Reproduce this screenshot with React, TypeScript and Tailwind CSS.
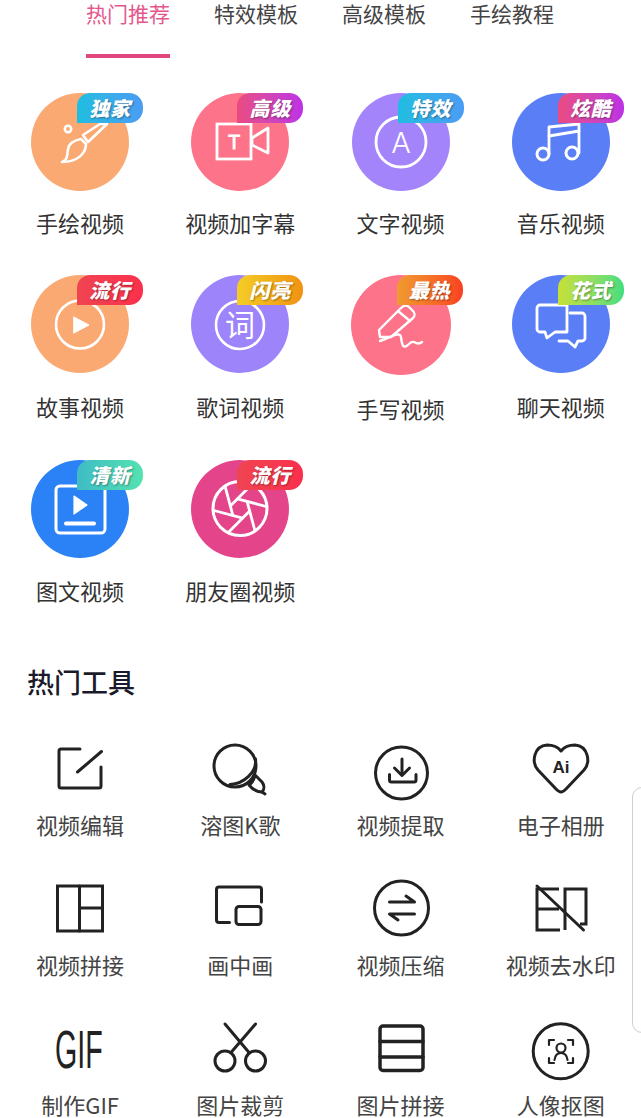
import React from "react";

const W = "#ffffff";

function CircleSvg({ children, size = 98 }: { children: React.ReactNode; size?: number }) {
  return (
    <svg
      width={size}
      height={size}
      viewBox={`0 0 ${size} ${size}`}
      fill="none"
      stroke={W}
      strokeLinecap="round"
      strokeLinejoin="round"
      strokeWidth={2.6}
      className="absolute inset-0"
    >
      {children}
    </svg>
  );
}

const apertureLines = [0, 60, 120, 180, 240, 300].map((deg) => {
  const cx = 49;
  const cy = 48.5;
  const a = ((deg + 15) * Math.PI) / 180;
  const x1 = cx + 10 * Math.cos(a);
  const y1 = cy + 10 * Math.sin(a);
  const dx = Math.cos(a + (2 * Math.PI) / 3);
  const dy = Math.sin(a + (2 * Math.PI) / 3);
  const px = x1 - cx;
  const py = y1 - cy;
  const b = px * dx + py * dy;
  const t = -b + Math.sqrt(b * b - (px * px + py * py) + 27 * 27);
  return { x1, y1, x2: x1 + dx * t, y2: y1 + dy * t };
});

const videoIcons: Record<string, React.ReactNode> = {
  brush: (
    <CircleSvg>
      <circle cx="37" cy="36" r="3.2" />
      <path d="M52 42 L69 31 L76 31 L57 49 Z" />
      <path d="M31 69 C37 67 36 62 37 56 C38 50 45 47 50 46 L55 51 C55 60 47 69 31 69 Z" />
    </CircleSvg>
  ),
  video: (
    <CircleSvg>
      <rect x="26" y="31" width="34" height="35" strokeLinejoin="miter" strokeWidth="2.8" />
      <path d="M61 45 L77 35 L77 60 L61 52 Z" strokeWidth="2.8" />
      <text x="43" y="56" fill={W} stroke={W} strokeWidth="0.8" fontSize="20" textAnchor="middle" fontFamily="'Liberation Sans', sans-serif">T</text>
    </CircleSvg>
  ),
  a: (
    <CircleSvg>
      <circle cx="49" cy="49" r="25" strokeWidth="2.8" />
      <text x="49" y="60" fill={W} stroke="none" fontSize="29" textAnchor="middle" fontFamily="'Inter', sans-serif" fontWeight="300">A</text>
    </CircleSvg>
  ),
  music: (
    <CircleSvg>
      <circle cx="31" cy="61" r="6" strokeWidth="3" />
      <circle cx="60" cy="60" r="6" strokeWidth="3" />
      <path d="M37 61 V34 L67 31 V60" strokeWidth="2.8" />
      <path d="M37 43 L67 38" strokeWidth="2.8" />
    </CircleSvg>
  ),
  play: (
    <CircleSvg>
      <circle cx="49" cy="49.5" r="24" strokeWidth="2.6" />
      <path d="M43 42 L58 50 L43 58 Z" fill={W} stroke={W} strokeWidth="1" />
    </CircleSvg>
  ),
  ci: (
    <CircleSvg>
      <circle cx="49" cy="50" r="24" strokeWidth="2.6" />
      <text x="49" y="61" fill={W} stroke="none" fontSize="30" textAnchor="middle" fontFamily="'Noto Sans CJK SC', sans-serif">词</text>
    </CircleSvg>
  ),
  pen: (
    <CircleSvg size={100}>
      <path d="M29 62 L28 55 L50 33 C53 30 56 30 58 32 L62 36 C64 38 64 41 62 43 L40 62 Z" strokeWidth="2.4" />
      <path d="M47 36 L59 46" strokeWidth="2.4" />
      <path d="M29 66 C40 62 49 56 50 62 C51 70 52 75 58 69 C64 63 65 72 71 67" strokeWidth="2.4" />
    </CircleSvg>
  ),
  chat: (
    <CircleSvg>
      <path d="M28 30 H55 V57 H43 L35 63 L33 57 H28 A3 3 0 0 1 25 54 V33 A3 3 0 0 1 28 30 Z" strokeWidth="2.8" />
      <path d="M58 38 H70 A3 3 0 0 1 73 41 V63 A3 3 0 0 1 70 66 H66 L63 72 L56 66 H47" strokeWidth="2.8" />
    </CircleSvg>
  ),
  player: (
    <CircleSvg>
      <rect x="25" y="26" width="49" height="47" rx="4" strokeWidth="3" />
      <path d="M43 36 L56 45 L43 54 Z" fill={W} stroke={W} strokeWidth="1.2" />
      <path d="M35 63.5 H63" strokeWidth="4" />
    </CircleSvg>
  ),
  aperture: (
    <CircleSvg>
      <circle cx="49" cy="48.5" r="27" strokeWidth="3" />
      {apertureLines.map((l, i) => (
        <line key={i} x1={l.x1} y1={l.y1} x2={l.x2} y2={l.y2} strokeWidth="2.8" />
      ))}
    </CircleSvg>
  ),
};

type Tile = { label: string; icon: string; circle: string; badge: string; grad: string; size?: string };

function VideoTile({ t, labelClass }: { t: Tile; labelClass: string }) {
  return (
    <div className="flex flex-col items-center">
      <div className={`relative rounded-full ${t.circle} ${t.size ?? "w-[98px] h-[98px]"}`}>
        {videoIcons[t.icon]}
        <div
          className={`absolute left-[46px] top-0 w-[66px] h-[30px] rounded-tl-[13px] rounded-tr-[14px] rounded-br-[14px] flex items-center justify-center text-white text-[20px] leading-none font-black italic tracking-[1px] [text-shadow:1px_1px_2px_rgba(0,0,0,0.35)] ${t.grad}`}
        >
          {t.badge}
        </div>
      </div>
      <div className={`${labelClass} mb-[2px] h-[30px] leading-[30px] text-[22px] text-[#333333] whitespace-nowrap`}>{t.label}</div>
    </div>
  );
}

const row1: Tile[] = [
  { label: "手绘视频", icon: "brush", circle: "bg-[#f9a971]", badge: "独家", grad: "bg-gradient-to-r from-[#1dbde0] to-[#4a9cf4]" },
  { label: "视频加字幕", icon: "video", circle: "bg-[#fd7389]", badge: "高级", grad: "bg-gradient-to-r from-[#ea4a80] to-[#bd2fe6]" },
  { label: "文字视频", icon: "a", circle: "bg-[#a384fa]", badge: "特效", grad: "bg-gradient-to-r from-[#1dbde0] to-[#4a9cf4]" },
  { label: "音乐视频", icon: "music", circle: "bg-[#5a7ef5]", badge: "炫酷", grad: "bg-gradient-to-r from-[#ea4a80] to-[#bd2fe6]" },
];
const row2: Tile[] = [
  { label: "故事视频", icon: "play", circle: "bg-[#f9a971]", badge: "流行", grad: "bg-gradient-to-r from-[#f04452] to-[#fb2f4c]" },
  { label: "歌词视频", icon: "ci", circle: "bg-[#9d84fb]", badge: "闪亮", grad: "bg-gradient-to-r from-[#f4cd25] to-[#f09212]" },
  { label: "手写视频", icon: "pen", circle: "bg-[#fd7389]", badge: "最热", grad: "bg-gradient-to-r from-[#f09a30] to-[#f83f22]", size: "w-[100px] h-[100px]" },
  { label: "聊天视频", icon: "chat", circle: "bg-[#5a7ef5]", badge: "花式", grad: "bg-gradient-to-r from-[#c6e034] to-[#3fdd7f]" },
];
const row3: Tile[] = [
  { label: "图文视频", icon: "player", circle: "bg-[#2b82f6]", badge: "清新", grad: "bg-gradient-to-r from-[#3fbcc4] to-[#54e2b0]" },
  { label: "朋友圈视频", icon: "aperture", circle: "bg-[#e4458a]", badge: "流行", grad: "bg-gradient-to-r from-[#f04452] to-[#fb2f4c]" },
];

function ToolSvg({ children }: { children: React.ReactNode }) {
  return (
    <svg width="64" height="64" viewBox="0 0 64 64" fill="none" stroke="#222222" strokeWidth="3" strokeLinecap="round" strokeLinejoin="round" className="overflow-visible">
      {children}
    </svg>
  );
}

const tools: { label: string; icon: React.ReactNode }[] = [
  {
    label: "视频编辑",
    icon: (
      <ToolSvg>
        <path d="M32 12 H13 A2 2 0 0 0 11 14 V49 A2 2 0 0 0 13 51 H51 A2 2 0 0 0 53 49 V30" />
        <path d="M29.5 35 L53.5 14.5" />
      </ToolSvg>
    ),
  },
  {
    label: "溶图K歌",
    icon: (
      <ToolSvg>
        <circle cx="27" cy="29" r="21" />
        <path d="M47.5 22 C49 35 36 47 22 47.5" />
        <path d="M41 48 C44 46 46 43 47 38 L54 45 C57 49 56 53 54 55 C50 55 45 53 41 48 Z" />
        <path d="M54 55 L57 57" />
      </ToolSvg>
    ),
  },
  {
    label: "视频提取",
    icon: (
      <ToolSvg>
        <circle cx="32.5" cy="36" r="26" />
        <path d="M33 22 V37.5" />
        <path d="M25.5 31 L33 38.5 L40.5 31" />
        <path d="M20.5 37.5 V43 A2 2 0 0 0 22.5 45 H45 A2 2 0 0 0 47 43 V37.5" />
      </ToolSvg>
    ),
  },
  {
    label: "电子相册",
    icon: (
      <ToolSvg>
        <path d="M32 55 C30 55 29 54 27 52 L9 33 C2 25 5 9 18 8 C24 8 29 10 32 14 C35 10 40 8 46 8 C59 9 62 25 55 33 L37 52 C35 54 34 55 32 55 Z" />
        <text x="32" y="36" fill="#222222" stroke="none" fontSize="17" fontWeight="700" textAnchor="middle" fontFamily="'Liberation Sans', sans-serif">Ai</text>
      </ToolSvg>
    ),
  },
  {
    label: "视频拼接",
    icon: (
      <ToolSvg>
        <rect x="9.5" y="9" width="45" height="45" strokeLinejoin="miter" />
        <path d="M31.5 9 V54 M31.5 31 H54.5" />
      </ToolSvg>
    ),
  },
  {
    label: "画中画",
    icon: (
      <ToolSvg>
        <path d="M21.5 45.5 H11 A2.5 2.5 0 0 1 8.5 43 V12.5 A2.5 2.5 0 0 1 11 10 H51 A2.5 2.5 0 0 1 53.5 12.5 V25" />
        <rect x="28" y="29.5" width="25" height="18" rx="3" />
      </ToolSvg>
    ),
  },
  {
    label: "视频压缩",
    icon: (
      <ToolSvg>
        <circle cx="32.5" cy="31" r="27" />
        <path d="M20.5 25 H45.5 L37 19" />
        <path d="M45.5 37 H20.5 L29 43" />
      </ToolSvg>
    ),
  },
  {
    label: "视频去水印",
    icon: (
      <ToolSvg>
        <path d="M30 12 H8 V53 H31 M8 32 H30" strokeLinecap="butt" strokeLinejoin="miter" />
        <path d="M36 53 V12 H57 V47 H51" strokeLinecap="butt" strokeLinejoin="miter" />
        <path d="M8 9 L54.5 53" />
      </ToolSvg>
    ),
  },
  {
    label: "制作GIF",
    icon: (
      <ToolSvg>
        <text transform="translate(7 51) scale(0.53 1)" fill="#222222" stroke="none" fontSize="54" fontFamily="'Liberation Sans', sans-serif">GIF</text>
      </ToolSvg>
    ),
  },
  {
    label: "图片裁剪",
    icon: (
      <ToolSvg>
        <circle cx="17" cy="44" r="10" />
        <circle cx="47.5" cy="44" r="10" />
        <path d="M17 7 L41 35.5" />
        <path d="M47.5 7 L23 35.5" />
      </ToolSvg>
    ),
  },
  {
    label: "图片拼接",
    icon: (
      <ToolSvg>
        <rect x="11" y="9" width="43" height="44.5" rx="3" strokeWidth="3.5" />
        <path d="M11 24.5 H54 M11 40 H54" strokeWidth="3.5" />
      </ToolSvg>
    ),
  },
  {
    label: "人像抠图",
    icon: (
      <ToolSvg>
        <circle cx="31.7" cy="34.3" r="27.5" />
        <g strokeWidth="2.2">
          <path d="M20 28 V23 H25 M39 23 H44 V28 M20 41 V46 H25 M39 46 H44 V41" />
          <circle cx="32" cy="31" r="4.5" />
          <path d="M25.5 43 C26 38.5 28.5 36 32 36 C35.5 36 38 38.5 38.5 43" />
        </g>
      </ToolSvg>
    ),
  },
];

const tabs = ["热门推荐", "特效模板", "高级模板", "手绘教程"];

export default function App() {
  return (
    <div className="relative w-[641px] h-[1118px] overflow-hidden bg-white font-['Noto_Sans_CJK_SC','Noto_Sans',sans-serif]">
      <div className="flex gap-[44px] pl-[86px]">
        {tabs.map((t, i) => (
          <div key={t} className="flex flex-col w-[84px]">
            <div className={`h-[30px] leading-[30px] -mt-[2px] text-[21px] whitespace-nowrap ${i === 0 ? "text-[#e3588c]" : "text-[#444444]"}`}>{t}</div>
            <div className={`mt-[26px] h-[4px] ${i === 0 ? "bg-[#e0477f]" : ""}`} />
          </div>
        ))}
      </div>

      <div className="grid grid-cols-4 items-start mt-[35px]">
        {row1.map((t) => (
          <VideoTile key={t.label} t={t} labelClass="mt-[16px]" />
        ))}
      </div>
      <div className="grid grid-cols-4 items-start mt-[36px]">
        {row2.map((t) => (
          <VideoTile key={t.label} t={t} labelClass="mt-[18px]" />
        ))}
      </div>
      <div className="grid grid-cols-4 items-start mt-[35px]">
        {row3.map((t) => (
          <VideoTile key={t.label} t={t} labelClass="mt-[17px]" />
        ))}
      </div>

      <h2 className="mt-[57px] pl-[27px] h-[36px] leading-[36px] text-[27px] font-medium text-[#1a1a2a]">热门工具</h2>

      <div className="grid grid-cols-4 gap-y-[37px] mt-[37px]">
        {tools.map((t) => (
          <div key={t.label} className="flex flex-col items-center">
            {t.icon}
            <div className="mt-[8px] mb-[1px] h-[30px] leading-[30px] text-[22px] text-[#444444] whitespace-nowrap">{t.label}</div>
          </div>
        ))}
      </div>

      <div className="absolute left-[632px] top-[787px] w-[20px] h-[246px] rounded-l-[10px] border border-[#cfcfcf] bg-white" />
    </div>
  );
}
